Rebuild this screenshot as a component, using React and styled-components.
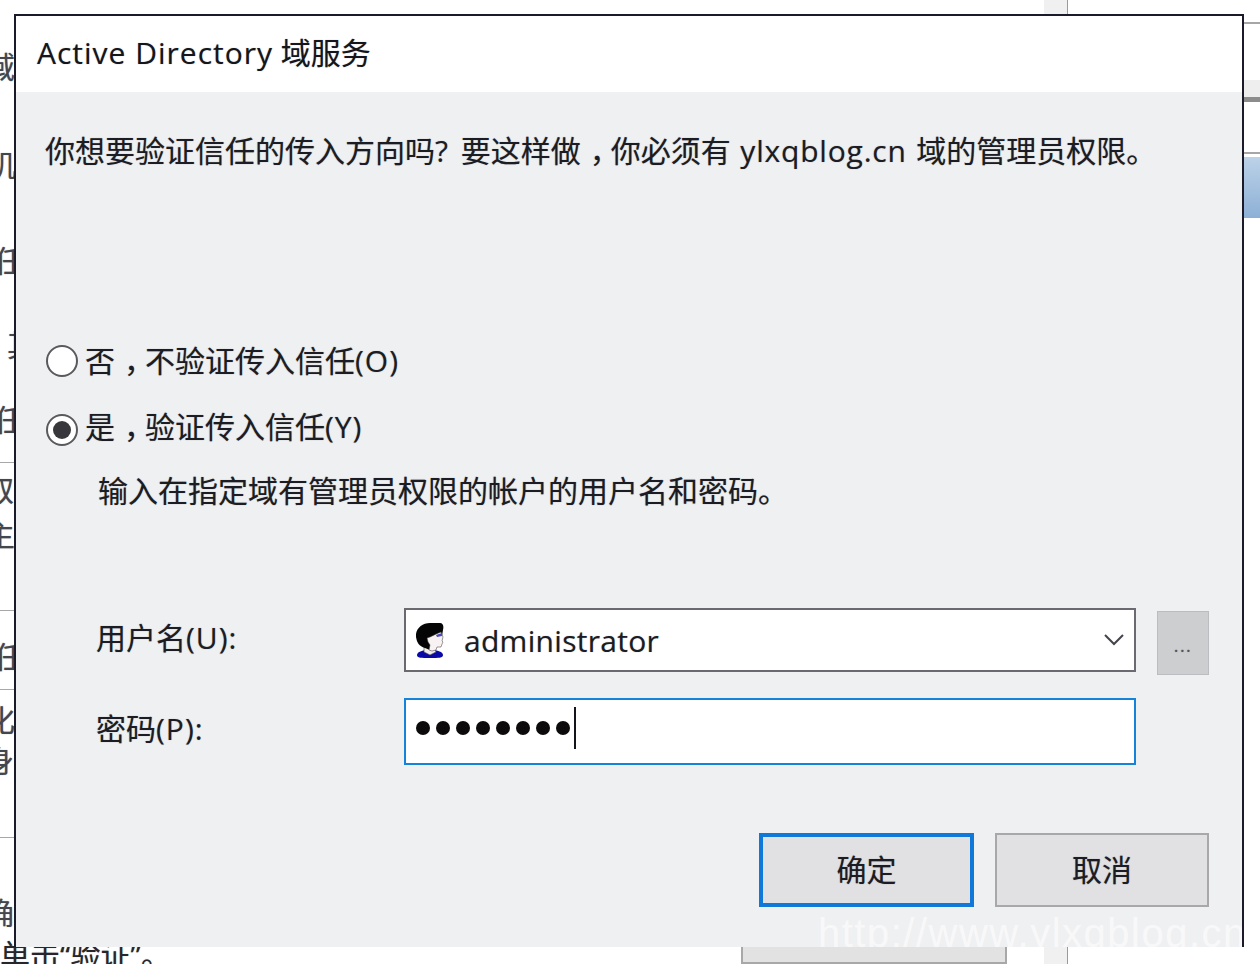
import React from 'react'
import styled, { createGlobalStyle } from 'styled-components'

const leftRows = [
  { gap: 52, text: '域', shift: -15 },
  { gap: 68, text: '机', shift: -14 },
  { gap: 66, text: '任', shift: -6 },
  { gap: 54, text: '其', shift: 7 },
  { gap: 45, text: '任', shift: -6 },
  { gap: 27, line: true },
  { gap: 12, text: '取', shift: -16 },
  { gap: 15, text: '主', shift: -15 },
  { gap: 60, line: true },
  { gap: 31, text: '任', shift: -6 },
  { gap: 17, line: true },
  { gap: 15, text: '化', shift: -15 },
  { gap: 11, text: '身', shift: -16 },
  { gap: 61, line: true },
  { gap: 60, text: '确', shift: -16 },
]

const App = () => {
  return (
    <>
      <GlobalStyle />
      <Page>
        <LeftStrip>
          {leftRows.map((row, i) =>
            row.line ? (
              <StripLine key={i} $gap={row.gap} />
            ) : (
              <StripChar key={i} $gap={row.gap} $shift={row.shift}>
                {row.text}
              </StripChar>
            )
          )}
        </LeftStrip>

        <TopStrip>
          <ScrollStub />
        </TopStrip>

        <Dialog>
          <TitleBar>
            <Latin>Active Directory</Latin> 域服务
          </TitleBar>
          <Body>
            <Message>
              你想要验证信任的传入方向吗<Question>? </Question>要这样做<Comma>，</Comma>你必须有
              <Domain> ylxqblog.cn </Domain>域的管理员权限。
            </Message>

            <Options>
              <Option>
                <Radio />
                <span>
                  否<Comma>，</Comma>不验证传入信任<Latin>(O)</Latin>
                </span>
              </Option>
              <Option>
                <Radio $checked />
                <span>
                  是<Comma>，</Comma>验证传入信任<Latin>(Y)</Latin>
                </span>
              </Option>
            </Options>

            <Hint>输入在指定域有管理员权限的帐户的用户名和密码。</Hint>

            <FormGrid>
              <FieldLabel $lift={2}>
                用户名<Latin>(U):</Latin>
              </FieldLabel>
              <Combo>
                <UserIcon />
                <ComboValue>administrator</ComboValue>
                <Chevron />
              </Combo>
              <BrowseButton>...</BrowseButton>

              <FieldLabel $lift={3}>
                密码<Latin>(P):</Latin>
              </FieldLabel>
              <PasswordField>
                {Array.from({ length: 8 }).map((_, i) => (
                  <PasswordDot key={i} />
                ))}
                <Caret />
              </PasswordField>
            </FormGrid>

            <Actions>
              <ActionButton $primary>确定</ActionButton>
              <ActionButton>取消</ActionButton>
            </Actions>
          </Body>
        </Dialog>

        <RightStrip>
          <RightLine $gap={22} />
          <RightBand />
          <RightRule />
          <RightLine $gap={50} />
          <RightBlue />
        </RightStrip>

        <BottomStrip>
          <BottomText>单击“验证”。</BottomText>
          <BottomButton />
          <ScrollStub $bottom />
        </BottomStrip>

        <Watermark>http://www.ylxqblog.cn</Watermark>
      </Page>
    </>
  )
}

const UserIcon = () => (
  <svg width="28" height="35" viewBox="0 0 28 35" aria-hidden="true">
    <path d="M1 32c0-3 5-5 13-5s13 2 13 5-4 3-13 3-13 0-13-3z" fill="#0a0aa8" />
    <path d="M8 24l10 0 2 5-6 3-6-3z" fill="#f3ecec" stroke="#444" strokeWidth="0.6" />
    <path d="M0 14C-1 6 6 0 14 0h10c3 0 4 3 3 7l-1 6-9 3-2 5-1 6-5-2C3 23 1 20 0 14z" fill="#050505" />
    <path d="M11 15c4-1 8-4 14-6l2 5-1 4 1 1-1 2-1 3h-4l-1 3-4 1-3-1 1-5-2-3z" fill="#f8f2f2" stroke="#333" strokeWidth="0.5" />
    <path d="M20 12l6-2 0 3-5 1z" fill="#4a4ab8" />
  </svg>
)

const Chevron = () => (
  <ChevronIcon width="22" height="14" viewBox="0 0 22 14" aria-hidden="true">
    <path d="M2 2l9 9 9-9" fill="none" stroke="#44444c" strokeWidth="2" />
  </ChevronIcon>
)

const GlobalStyle = createGlobalStyle`
  html, body {
    margin: 0;
    padding: 0;
    background: #ffffff;
  }
`

const Page = styled.div`
  position: relative;
  width: 1260px;
  height: 964px;
  overflow: hidden;
  display: grid;
  grid-template-columns: 14px 1230px 16px;
  grid-template-rows: 14px 933px 17px;
  background: #ffffff;
  color: #1c1c24;
  font-family: "Open Sans", "Noto Sans CJK SC", sans-serif;
  font-size: 30px;
  text-shadow: 0 0 1px rgba(28, 28, 36, 0.45);
`

const Latin = styled.span`
  letter-spacing: 1px;
`

const Domain = styled.span`
  letter-spacing: 0.8px;
  word-spacing: 1px;
`

const Question = styled.span`
  letter-spacing: 2.5px;
`

const Comma = styled.span`
  display: inline-block;
  width: 30px;
  box-sizing: border-box;
  padding-left: 11px;
  font-feature-settings: "palt";
`

const LeftStrip = styled.div`
  grid-column: 1;
  grid-row: 1 / 3;
  overflow: hidden;
  display: flex;
  flex-direction: column;
  color: #44464e;
`

const StripChar = styled.div`
  flex: none;
  height: 30px;
  line-height: 30px;
  margin-top: ${(p) => p.$gap}px;
  margin-left: ${(p) => p.$shift}px;
  white-space: nowrap;
`

const StripLine = styled.div`
  flex: none;
  height: 1px;
  margin-top: ${(p) => p.$gap}px;
  background: #a8a8a8;
`

const TopStrip = styled.div`
  grid-column: 2 / 4;
  grid-row: 1;
  display: flex;
`

const ScrollStub = styled.div`
  flex: none;
  width: 24px;
  height: ${(p) => (p.$bottom ? '17px' : '14px')};
  margin-left: ${(p) => (p.$bottom ? '37px' : '1030px')};
  background: #f0f0f0;
  border-right: 1px solid #9a9a9a;
  box-sizing: border-box;
`

const Dialog = styled.div`
  position: relative;
  z-index: 1;
  grid-column: 2;
  grid-row: 2;
  display: flex;
  flex-direction: column;
  box-sizing: border-box;
  border: 2px solid #1a1a28;
  border-bottom: none;
  background: #eff0f2;
`

const TitleBar = styled.div`
  flex: none;
  height: 76px;
  box-sizing: border-box;
  padding-left: 21px;
  line-height: 73px;
  background: #ffffff;
  color: #15151c;
`

const Body = styled.div`
  flex: 1;
  display: flex;
  flex-direction: column;
  padding: 39px 33px 0 29px;
`

const Message = styled.div`
  height: 40px;
  line-height: 40px;
  white-space: nowrap;
`

const Options = styled.div`
  display: flex;
  flex-direction: column;
  gap: 26px;
  margin-top: 170px;
`

const Option = styled.div`
  display: flex;
  align-items: center;
  height: 40px;
  line-height: 40px;
  gap: 8px;
  white-space: nowrap;
`

const Radio = styled.span`
  flex: none;
  display: flex;
  align-items: center;
  justify-content: center;
  box-sizing: border-box;
  width: 32px;
  height: 32px;
  margin: ${(p) => (p.$checked ? '6px' : '0')} -1px 0 1px;
  border-radius: 50%;
  border: 2px solid #5a5a5e;
  background: #ffffff;
  &::after {
    content: '';
    display: ${(p) => (p.$checked ? 'block' : 'none')};
    width: 18px;
    height: 18px;
    border-radius: 50%;
    background: #38383c;
  }
`

const Hint = styled.div`
  height: 40px;
  line-height: 40px;
  margin: 24px 0 0 53px;
  white-space: nowrap;
`

const FormGrid = styled.div`
  display: grid;
  grid-template-columns: 308px 732px 52px;
  grid-template-rows: 64px 67px;
  row-gap: 26px;
  margin: 97px 0 0 51px;
`

const FieldLabel = styled.div`
  align-self: center;
  line-height: 40px;
  margin-bottom: ${(p) => p.$lift * 2}px;
`

const Combo = styled.div`
  display: flex;
  align-items: center;
  box-sizing: border-box;
  padding: 0 9px 0 10px;
  border: 2px solid #6a6a70;
  background: #ffffff;
`

const ComboValue = styled.span`
  flex: 1;
  margin: 2px 0 0 20px;
  letter-spacing: 0.3px;
  line-height: 40px;
`

const ChevronIcon = styled.svg`
  flex: none;
`

const BrowseButton = styled.div`
  grid-column: 3;
  margin: 3px 0 -3px 21px;
  width: 52px;
  box-sizing: border-box;
  border: 1px solid #bcbdc0;
  background: #cdced0;
  color: #55555c;
  font-size: 18px;
  letter-spacing: 1.5px;
  text-align: center;
  line-height: 66px;
`

const PasswordField = styled.div`
  display: flex;
  align-items: center;
  gap: 6px;
  box-sizing: border-box;
  padding: 0 0 8px 10px;
  border: 2px solid #1583d8;
  background: #ffffff;
`

const PasswordDot = styled.span`
  flex: none;
  width: 14px;
  height: 14px;
  border-radius: 50%;
  background: #0c0a0a;
`

const Caret = styled.span`
  flex: none;
  width: 2px;
  height: 42px;
  margin: 0 0 0 -2px;
  background: #14141c;
`

const Actions = styled.div`
  display: flex;
  justify-content: flex-end;
  gap: 21px;
  margin-top: 68px;
`

const ActionButton = styled.div`
  width: ${(p) => (p.$primary ? '215px' : '214px')};
  height: 74px;
  box-sizing: border-box;
  border: ${(p) => (p.$primary ? '4px solid #1078d8' : '2px solid #a8a8aa')};
  background: #e1e1e3;
  text-align: center;
  line-height: ${(p) => (p.$primary ? '66px' : '70px')};
`

const RightStrip = styled.div`
  grid-column: 3;
  grid-row: 2;
  display: flex;
  flex-direction: column;
  margin-top: -14px;
`

const RightLine = styled.div`
  flex: none;
  height: 2px;
  margin-top: ${(p) => p.$gap}px;
  background: #a6a6a6;
`

const RightBand = styled.div`
  flex: none;
  height: 17px;
  margin-top: 56px;
  background: #eeeeee;
`

const RightRule = styled.div`
  flex: none;
  height: 5px;
  background: #8c8c8c;
`

const RightBlue = styled.div`
  flex: none;
  height: 61px;
  margin-top: 3px;
  background: linear-gradient(180deg, #bcd2e8, #8db0d6);
`

const BottomStrip = styled.div`
  grid-column: 1 / 4;
  grid-row: 3;
  display: flex;
`

const BottomText = styled.div`
  flex: none;
  width: 741px;
  height: 24px;
  line-height: 30px;
  margin-top: -7px;
  white-space: nowrap;
  color: #26262c;
`

const BottomButton = styled.div`
  flex: none;
  width: 266px;
  height: 17px;
  box-sizing: border-box;
  border: 2px solid #a8a8a8;
  border-top: none;
  background: #e2e2e2;
`

const Watermark = styled.div`
  position: absolute;
  z-index: 2;
  left: 818px;
  top: 911px;
  width: 424px;
  height: 36px;
  overflow: hidden;
  font-family: "Liberation Sans", sans-serif;
  font-size: 40px;
  letter-spacing: 1.5px;
  line-height: 44px;
  white-space: nowrap;
  color: rgba(255, 255, 255, 0.6);
  text-shadow: none;
`

export default App
